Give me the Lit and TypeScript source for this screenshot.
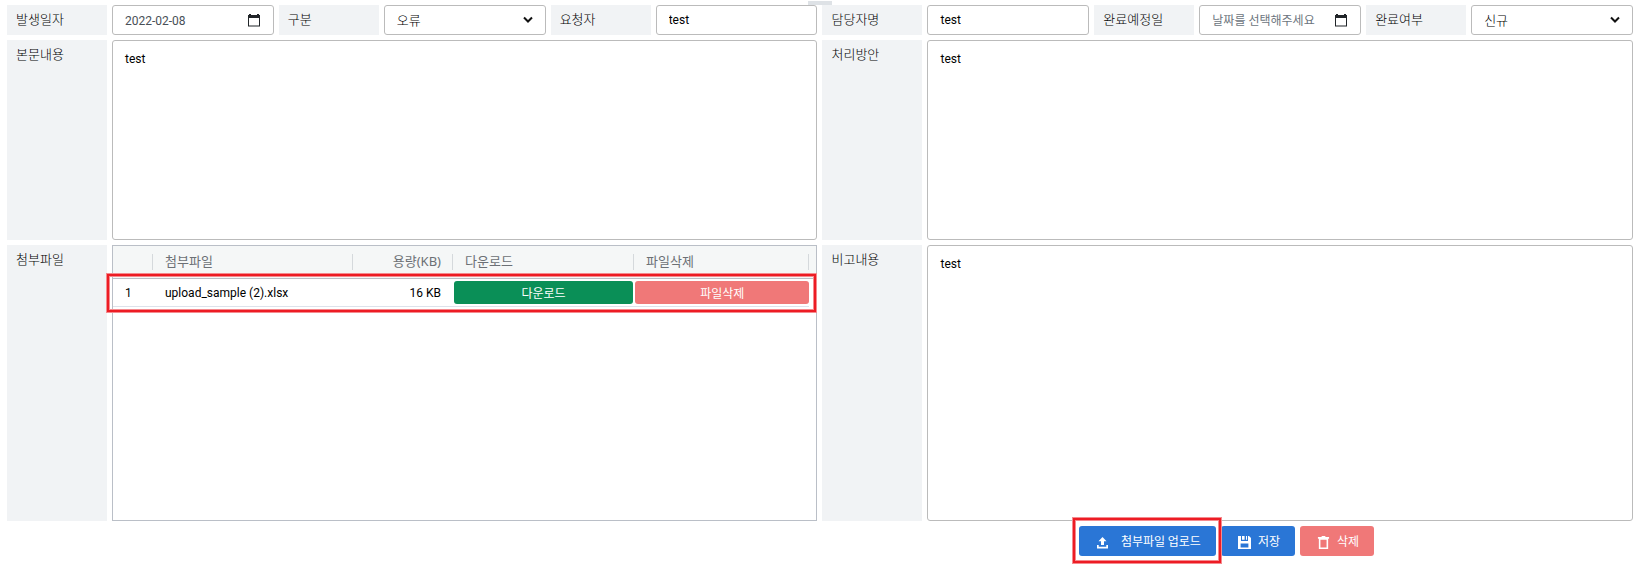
import { LitElement, html, css, svg } from "lit";
import { customElement, state } from "lit/decorators.js";

interface Attachment {
  name: string;
  sizeKb: number;
}

const calendarIcon = svg`<svg class="calendar" viewBox="0 0 12 13" aria-hidden="true">
  <path fill="currentColor" d="M1 0h2v1h6V0h2v1h1v11.5H0V1h1zM1 4v7.5h10V4z" fill-rule="evenodd"/></svg>`;

const uploadIcon = svg`<svg class="icon" viewBox="0 0 13 13" aria-hidden="true">
  <path fill="currentColor" d="M6.5 1l4 4.2H8V9H5V5.200H2.500zM1 9h1.700v1.700h7.600V9H12v3.500H1z"/></svg>`;

const saveIcon = svg`<svg class="icon" viewBox="0 0 13 13" aria-hidden="true">
  <path fill="currentColor" fill-rule="evenodd" d="M0 0h3v5h7V0h1l2 2v11H0zM2.6 7.6v3.8h7.8V7.6zM4 0h2.6v3.8H4zM8 0h1v3.8H8z"/></svg>`;

const trashIcon = svg`<svg class="icon" viewBox="0 0 12 14" aria-hidden="true">
  <path fill="currentColor" fill-rule="evenodd" d="M4 0h4v1h4v2H0V1h4zM1 3h10v11H1zM2.7 4v8.4h6.6V4z"/></svg>`;

@customElement("app-root")
export class AppRoot extends LitElement {
  @state() private files: Attachment[] = [{ name: "upload_sample (2).xlsx", sizeKb: 16 }];

  static styles = css`
    :host {
      display: block;
      font-family: "Noto Sans", "Noto Sans CJK KR", sans-serif;
      font-size: 12px;
      color: #212529;
    }
    * {
      box-sizing: border-box;
    }
    .page {
      position: relative;
      min-height: 100vh;
      padding: 5px 5px 16px 7px;
    }
    .handle {
      position: absolute;
      top: 1px;
      left: 50%;
      width: 24px;
      height: 4px;
      margin-left: -11px;
      background: #dee2e6;
    }
    .form {
      display: grid;
      grid-template-columns: repeat(6, 100px minmax(0, 1fr));
      grid-template-rows: 30px 200px 276px;
      gap: 5px;
    }
    .label {
      padding: 0 9px;
      background: #f1f3f5;
      color: #000;
      font-size: 13px;
      font-weight: 300;
      line-height: 29px;
      white-space: nowrap;
    }
    .wide {
      grid-column: span 5;
    }
    .field {
      position: relative;
      display: flex;
      min-width: 0;
    }
    .input,
    .select,
    .area {
      width: 100%;
      height: 100%;
      margin: 0;
      padding: 0 12px;
      border: 1px solid #bbb;
      border-radius: 3px;
      background: #fff;
      color: #000;
      font-family: Roboto, "Noto Sans CJK KR", sans-serif;
      font-size: 12px;
      outline: none;
    }
    .select {
      padding: 1px 12px 0;
      appearance: none;
      font-size: 13px;
      font-weight: 300;
    }
    .area {
      display: block;
      padding: 9px 12px;
      line-height: 18px;
      resize: none;
    }
    .date {
      padding: 1px 34px 0 12px;
      color: #495057;
    }
    .date::placeholder {
      color: #6c757d;
      opacity: 1;
    }
    .pick {
      position: absolute;
      top: 0;
      right: 0;
      display: flex;
      align-items: center;
      height: 100%;
      padding: 0 14px;
      border: 0;
      background: none;
      color: #212529;
    }
    .calendar {
      width: 12px;
      height: 13px;
    }
    .chevron {
      position: absolute;
      top: 11px;
      right: 13px;
      width: 10px;
      height: 8px;
      pointer-events: none;
    }
    .grid {
      border: 1px solid #babfc7;
      min-width: 0;
    }
    .table {
      width: 100%;
      table-layout: fixed;
      border-collapse: separate;
      border-spacing: 0;
    }
    .c-no { width: 40px; }
    .c-name { width: 200px; }
    .c-size { width: 100px; }
    .c-down { width: 181px; }
    .c-end { width: 7px; }
    .head {
      position: relative;
      height: 33px;
      padding: 0 12px 3px;
      border-bottom: 1px solid #babfc7;
      background: #f5f7f7;
      color: #6c7075;
      font-size: 13px;
      font-weight: 400;
      text-align: left;
      white-space: nowrap;
    }
    .head:not(.end)::after {
      content: "";
      position: absolute;
      top: 8px;
      right: 0;
      width: 1px;
      height: 16px;
      background: #d5d9dc;
    }
    .head.end {
      padding: 0;
    }
    .row {
      position: relative;
    }
    .cell {
      height: 28px;
      padding: 1px 12px 0;
      border-bottom: 1px solid #dde2eb;
      color: #000;
      font-family: Roboto, "Noto Sans", sans-serif;
      white-space: nowrap;
    }
    .head.num,
    .cell.num {
      text-align: right;
    }
    .cell.action {
      padding: 0 0 0 1px;
    }
    .btn {
      display: flex;
      align-items: center;
      justify-content: center;
      gap: 7px;
      height: 30px;
      padding: 0 15px 1px 17px;
      border: 0;
      border-radius: 3px;
      background: #2a76d6;
      color: #fff;
      font-family: "Noto Sans CJK KR", sans-serif;
      font-size: 12px;
      white-space: nowrap;
    }
    .btn.small {
      width: 100%;
      height: 23px;
      padding: 0;
    }
    .btn.green {
      background: #0a8f57;
      width: 179px;
    }
    .btn.red {
      background: #f07878;
    }
    .btn.upload {
      gap: 12px;
      padding: 0 15px 1px 17px;
    }
    .icon {
      width: 13px;
      height: 13px;
      margin-top: 3px;
    }
    .mark {
      position: absolute;
      border: 2px solid #ed1c24;
      box-shadow: 0 0 0 1px #f58a8e, inset 0 0 0 1px #f58a8e;
      pointer-events: none;
    }
    .row-mark {
      top: -5px;
      bottom: -5px;
      left: -6px;
      right: 0;
    }
    .upload-mark {
      z-index: 1;
      top: -8px;
      bottom: -7px;
      left: -6px;
      right: -5px;
    }
    .actions {
      display: flex;
      justify-content: center;
      gap: 5px;
      width: 50%;
      margin: 5px 0 0 auto;
    }
    .marked {
      position: relative;
    }
  `;

  private removeFile(index: number) {
    this.files = this.files.filter((_, i) => i !== index);
  }

  private text(id: string, label: string, value: string) {
    return html`<label class="label" for=${id}>${label}</label>
      <div class="field"><input class="input" id=${id} type="text" .value=${value} /></div>`;
  }

  private date(id: string, label: string, value: string) {
    return html`<label class="label" for=${id}>${label}</label>
      <div class="field">
        <input class="input date" id=${id} type="text" placeholder="날짜를 선택해주세요" .value=${value} />
        <button class="pick" type="button" aria-label=${label}>${calendarIcon}</button>
      </div>`;
  }

  private select(id: string, label: string, options: string[]) {
    return html`<label class="label" for=${id}>${label}</label>
      <div class="field">
        <select class="select" id=${id}>${options.map((o) => html`<option>${o}</option>`)}</select>
        <svg class="chevron" viewBox="0 0 10 8" aria-hidden="true">
          <path d="M1 1.5l4 4 4-4" fill="none" stroke="#111" stroke-width="2" />
        </svg>
      </div>`;
  }

  private area(id: string, label: string, value: string) {
    return html`<label class="label" for=${id}>${label}</label>
      <div class="wide"><textarea class="area" id=${id} .value=${value}></textarea></div>`;
  }

  render() {
    return html`
      <main class="page">
        <div class="handle"></div>
        <div class="form">
          ${this.date("occurred", "발생일자", "2022-02-08")}
          ${this.select("kind", "구분", ["오류"])}
          ${this.text("requester", "요청자", "test")}
          ${this.text("manager", "담당자명", "test")}
          ${this.date("due", "완료예정일", "")}
          ${this.select("status", "완료여부", ["신규"])}
          ${this.area("body", "본문내용", "test")}
          ${this.area("plan", "처리방안", "test")}
          <div class="label" id="files">첨부파일</div>
          <div class="grid wide">
            <table class="table" aria-labelledby="files">
              <colgroup>
                <col class="c-no" /><col class="c-name" /><col class="c-size" />
                <col class="c-down" /><col /><col class="c-end" />
              </colgroup>
              <thead>
                <tr>
                  <th class="head"></th>
                  <th class="head">첨부파일</th>
                  <th class="head num">용량(KB)</th>
                  <th class="head">다운로드</th>
                  <th class="head">파일삭제</th>
                  <th class="head end"></th>
                </tr>
              </thead>
              <tbody>
                ${this.files.map(
                  (f, i) => html`<tr class="row">
                    <td class="cell">${i + 1}</td>
                    <td class="cell">${f.name}</td>
                    <td class="cell num">${f.sizeKb} KB</td>
                    <td class="cell action"><button class="btn small green" type="button">다운로드</button></td>
                    <td class="cell action">
                      <button class="btn small red" type="button" @click=${() => this.removeFile(i)}>파일삭제</button>
                      <div class="mark row-mark"></div>
                    </td>
                  </tr>`
                )}
              </tbody>
            </table>
          </div>
          ${this.area("note", "비고내용", "test")}
        </div>
        <div class="actions">
          <div class="marked">
            <button class="btn upload" type="button">${uploadIcon}첨부파일 업로드</button>
            <div class="mark upload-mark"></div>
          </div>
          <button class="btn" type="button">${saveIcon}저장</button>
          <button class="btn red" type="button">${trashIcon}삭제</button>
        </div>
      </main>
    `;
  }
}
